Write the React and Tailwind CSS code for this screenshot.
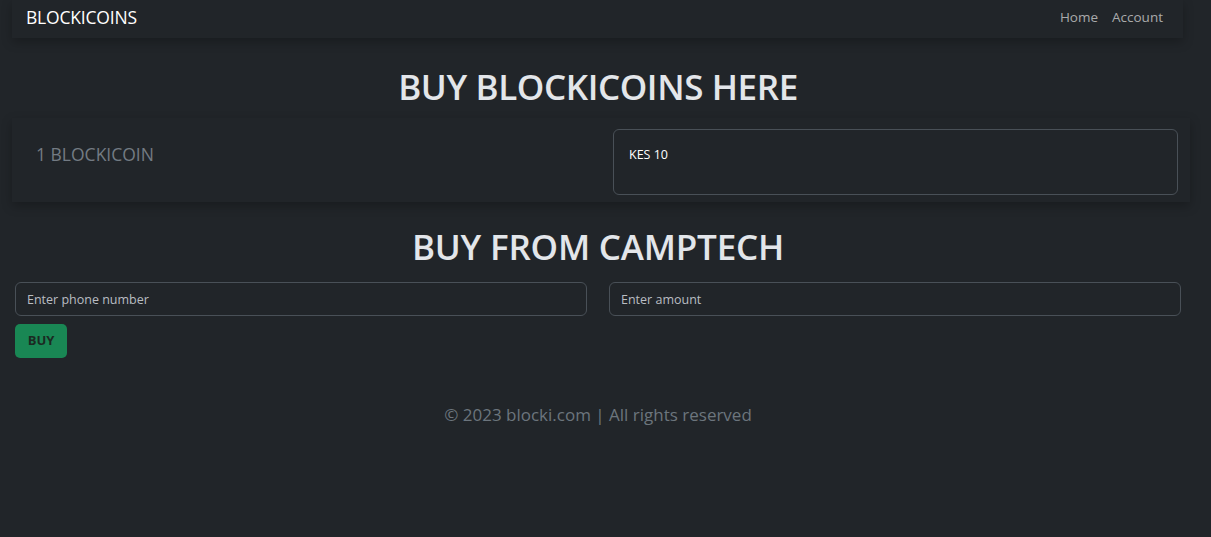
export default function App() {
  return (
    <div className="min-h-[537px] bg-[#212529] text-[#dee2e6] font-['Open_Sans','Noto_Sans',sans-serif]">
      <div className="w-[1196px]">
        {/* navbar */}
        <nav className="ml-[12px] mr-[13px] h-[38px] flex items-start justify-between pt-[6px] px-[14px] shadow-[0_4px_10px_rgba(0,0,0,0.25)] bg-[#212529]">
          <span className="text-[17.5px] leading-[22px] text-white tracking-[-0.2px]">BLOCKICOINS</span>
          <div className="flex gap-[14px] text-[13.5px] leading-[22px] text-[#a9aaab] pr-[6px]">
            <a>Home</a>
            <a>Account</a>
          </div>
        </nav>

        <h1 className="mt-[28px] text-center text-[35px] leading-[42px] font-semibold tracking-[-0.4px] text-[#e3e6ea]">BUY BLOCKICOINS HERE</h1>

        {/* price card */}
        <div className="ml-[12px] mr-[6px] mt-[10px] grid grid-cols-2 gap-[12px] pt-[11px] pb-[7px] pl-[24px] pr-[12px] shadow-[0_4px_10px_rgba(0,0,0,0.25)]">
          <div className="pt-[12px] text-[17.5px] text-[#737b83]">1 BLOCKICOIN</div>
          <div className="h-[66px] rounded-[6px] border border-[#495057] px-[15px] pt-[16px] text-[12.5px] text-white">KES 10</div>
        </div>

        <h2 className="mt-[24px] text-center text-[35px] leading-[42px] font-semibold tracking-[-0.2px] text-[#e3e6ea]">BUY FROM CAMPTECH</h2>

        <div className="mx-[15px] mt-[14px] grid grid-cols-2 gap-[22px]">
          <input className="h-[34px] rounded-[6px] border border-[#495057] bg-[#212529] px-[11px] text-[12.5px] text-[#dee2e6] placeholder:text-[#b9bdc2] outline-none" placeholder="Enter phone number" />
          <input className="h-[34px] rounded-[6px] border border-[#495057] bg-[#212529] px-[11px] text-[12.5px] text-[#dee2e6] placeholder:text-[#b9bdc2] outline-none" placeholder="Enter amount" />
        </div>
        <div className="mx-[15px] mt-[8px]">
          <button className="h-[34px] w-[52px] rounded-[5px] bg-[#198754] text-[13px] font-bold text-[#1b2a22]">BUY</button>
        </div>

        <footer className="mt-[44px] text-center text-[17px] text-[#6c757d]">© 2023 blocki.com | All rights reserved</footer>
      </div>
    </div>
  );
}
